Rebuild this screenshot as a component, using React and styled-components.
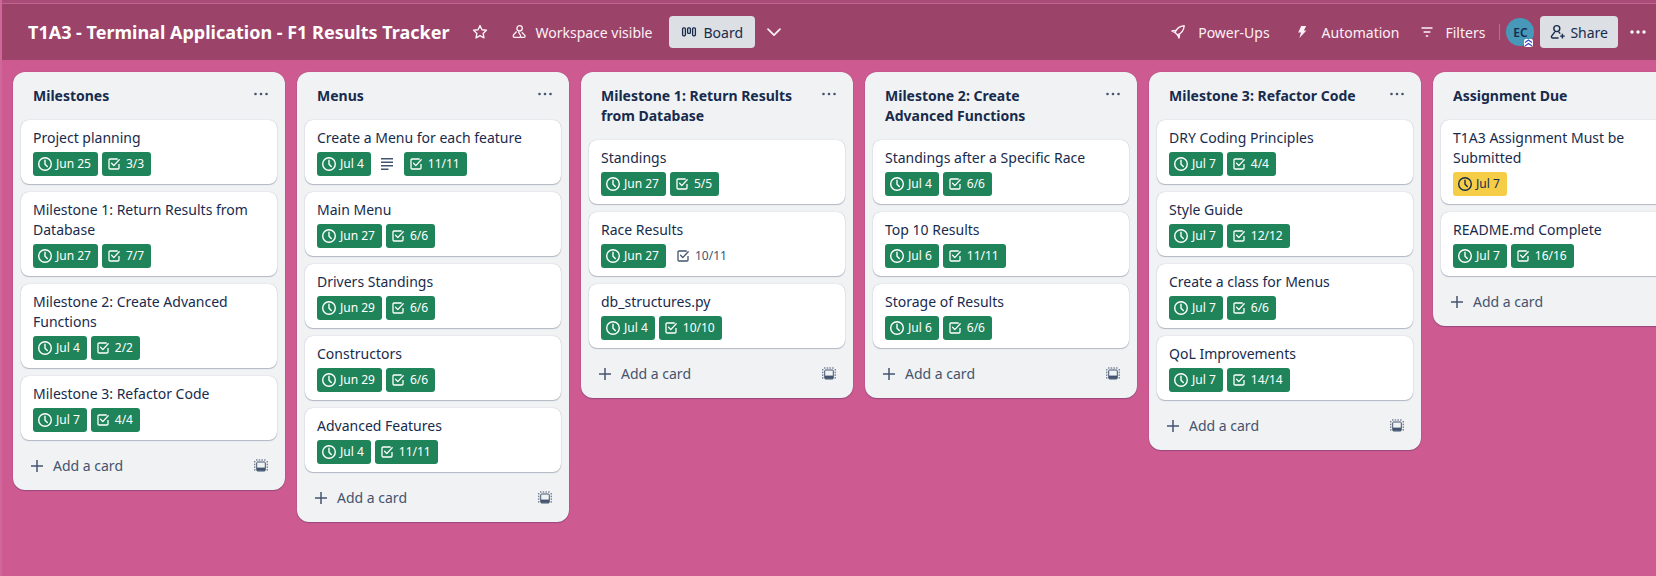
import React from 'react';
import styled, { createGlobalStyle } from 'styled-components';

const GlobalStyle = createGlobalStyle`
  html, body { margin: 0; padding: 0; height: 100%; overflow: hidden; }
  body { font-family: "Noto Sans", "Liberation Sans", sans-serif; font-size: 14px; background: #cd5a91; }
`;

const Page = styled.div`
  width: 1656px;
  height: 576px;
  box-sizing: border-box;
  display: flex;
  flex-direction: column;
  background: #cd5a91;
  border-left: 2px solid #d0679a;
  overflow: hidden;
`;
const TopEdge = styled.div`
  height: 4px;
  flex: none;
  background: #a94c78;
  border-bottom: 1px solid #c4638f;
  box-sizing: border-box;
`;
const Header = styled.header`
  height: 56px;
  flex: none;
  display: flex;
  align-items: center;
  padding: 0 10px 0 26px;
  background: #9c4369;
  color: #fdf1f6;
`;
const BoardTitle = styled.h1`
  margin: 0;
  font-size: 18px;
  line-height: 32px;
  font-weight: 700;
  color: #fff;
  white-space: nowrap;
`;
const HeaderItem = styled.div`
  display: flex;
  align-items: center;
  height: 32px;
  gap: ${p => p.$gap || 8}px;
  margin-left: ${p => p.$ml || 0}px;
  white-space: nowrap;
  color: ${p => (p.$light ? '#172b4d' : '#fdf1f6')};
  background: ${p => (p.$light ? '#dcdfe4' : 'transparent')};
  border-radius: 4px;
  padding: ${p => p.$pad || '0'};
  box-sizing: border-box;
`;
const Spacer = styled.div`flex: 1;`;
const Divider = styled.div`
  width: 1px;
  height: 16px;
  margin-left: 14px;
  background: rgba(255, 255, 255, 0.25);
`;
const Avatar = styled.div`
  position: relative;
  width: 28px;
  height: 28px;
  margin-left: 6px;
  border-radius: 50%;
  background: #4798b9;
  color: #172b4d;
  font-size: 12px;
  font-weight: 600;
  display: flex;
  align-items: center;
  justify-content: center;
`;
const AvatarBadge = styled.span`
  position: absolute;
  right: 1px;
  bottom: -1px;
  width: 9px;
  height: 8px;
  background: #fff;
  border-radius: 2px;
  display: flex;
`;
const Board = styled.main`
  flex: 1;
  display: flex;
  align-items: flex-start;
  gap: 12px;
  padding: 12px 0 0 11px;
  overflow: hidden;
`;
const Column = styled.section`
  flex: none;
  width: 272px;
  background: #f1f2f4;
  border-radius: 12px;
  box-shadow: 0 1px 1px #091e4240, 0 0 1px #091e424f;
  color: #172b4d;
`;
const ColumnHead = styled.div`
  display: flex;
  justify-content: space-between;
  padding: 14px 17px 14px 20px;
`;
const ColumnTitle = styled.h2`
  margin: 0;
  font-size: 14px;
  line-height: 20px;
  font-weight: 700;
  color: #172b4d;
  max-width: 200px;
`;
const CardList = styled.div`
  display: flex;
  flex-direction: column;
  gap: 8px;
  padding: 0 8px;
`;
const Card = styled.article`
  background: #fff;
  border-radius: 8px;
  padding: 8px 12px;
  box-shadow: 0 1px 1px #091e4240, 0 0 1px #091e424f;
`;
const CardText = styled.div`
  font-size: 14px;
  line-height: 20px;
  color: #172b4d;
`;
const Badges = styled.div`
  display: flex;
  align-items: center;
  gap: 4px;
  margin-top: 4px;
  height: 24px;
`;
const Badge = styled.span`
  display: inline-flex;
  align-items: center;
  height: 24px;
  gap: ${p => p.$gap}px;
  padding: ${p => (p.$tone === 'plain' ? '0 6px 0 5px' : '0 7px 0 4px')};
  border-radius: 3px;
  font-size: 12px;
  line-height: 16px;
  color: ${p => (p.$tone === 'yellow' ? '#172b4d' : p.$tone === 'plain' ? '#44546f' : '#fff')};
  background: ${p => (p.$tone === 'yellow' ? '#f5cd47' : p.$tone === 'plain' ? 'transparent' : '#1f845a')};
`;
const DescMark = styled.span`
  display: inline-flex;
  width: 24px;
  height: 24px;
  align-items: center;
  justify-content: center;
  color: #44546f;
  margin: 0 1px 0 0;
`;
const ColumnFoot = styled.div`
  display: flex;
  align-items: center;
  justify-content: space-between;
  height: 32px;
  padding: 10px 16px 8px 16px;
  color: #44546f;
`;
const AddCard = styled.div`
  display: flex;
  align-items: center;
  gap: 8px;
  font-size: 14px;
  line-height: 20px;
`;
const Svg = styled.svg`
  flex: none;
  display: block;
  fill: none;
  stroke: currentColor;
`;
const SolidSvg = styled.svg`
  flex: none;
  display: block;
  fill: ${p => p.$color || 'currentColor'};
`;

const Clock = () => (
  <Svg width="16" height="16" viewBox="0 0 16 16" strokeWidth="1.4">
    <circle cx="8" cy="8" r="6.3" />
    <path d="M8 4.2v4l2.3 2.4" strokeLinecap="round" strokeLinejoin="round" />
  </Svg>
);
const Check = () => (
  <Svg width="16" height="16" viewBox="0 0 16 16" strokeWidth="1.3">
    <path d="M13 8v3.9a1.1 1.1 0 0 1-1.1 1.1H4.1A1.1 1.1 0 0 1 3 11.9V4.1A1.1 1.1 0 0 1 4.1 3h7.6" />
    <path d="M5.6 7.2 7.8 9.6 13.2 3.8" strokeLinecap="round" strokeLinejoin="round" />
  </Svg>
);
const Lines = () => (
  <Svg width="16" height="16" viewBox="0 0 16 16" strokeWidth="1.6">
    <path d="M2 2.8h12M2 6.3h12M2 9.8h12M2 13.3h7.5" />
  </Svg>
);
const Dots = ({ color, size, step, r }) => (
  <SolidSvg $color={color} width={size} height="16" viewBox={`0 0 ${size} 16`}>
    <circle cx={size / 2 - step} cy="8" r={r} />
    <circle cx={size / 2} cy="8" r={r} />
    <circle cx={size / 2 + step} cy="8" r={r} />
  </SolidSvg>
);
const Plus = () => (
  <Svg width="16" height="16" viewBox="0 0 16 16" strokeWidth="1.5">
    <path d="M8 2v12M2 8h12" />
  </Svg>
);
const Template = () => (
  <Svg width="16" height="16" viewBox="0 0 16 16" strokeWidth="1">
    <path d="M3 2h10M1.8 3v10M14.2 3v10" strokeDasharray="1.5 1.2" />
    <rect x="3.7" y="4" width="8.6" height="9" rx="1" />
    <rect x="4" y="9.6" width="8" height="3.2" fill="currentColor" stroke="none" />
  </Svg>
);
const Star = () => (
  <Svg width="16" height="16" viewBox="0 0 16 16" strokeWidth="1.4" strokeLinejoin="round">
    <path d="M8 1.6l1.95 4.1 4.45.6-3.25 3.1.8 4.5L8 11.7l-3.95 2.2.8-4.5L1.6 6.3l4.45-.6z" />
  </Svg>
);
const People = () => (
  <Svg width="16" height="16" viewBox="0 0 16 16" strokeWidth="1.3" strokeLinejoin="round">
    <circle cx="8.6" cy="4.3" r="2.7" />
    <path d="M5.6 7.5 2.6 10.8c-.8 1-.5 2.6 1.1 2.6h4.7c1.3 0 1.5-1.3 1-2.2L7.3 7.6" />
    <path d="M10.8 8.2l3 3.2c.6.9.2 2-1 2H9.5" />
  </Svg>
);
const BoardIcon = () => (
  <Svg width="16" height="16" viewBox="0 0 16 16" strokeWidth="1.3">
    <rect x="1.6" y="3.8" width="2.8" height="8" rx="1" />
    <rect x="6.6" y="3.8" width="2.8" height="5.6" rx="1" />
    <rect x="11.6" y="3.8" width="2.8" height="8" rx="1" />
  </Svg>
);
const Chevron = () => (
  <Svg width="16" height="16" viewBox="0 0 16 16" strokeWidth="1.7" strokeLinecap="round" strokeLinejoin="round">
    <path d="M2 5.2l6 6 6-6" />
  </Svg>
);
const Rocket = () => (
  <Svg width="16" height="16" viewBox="0 0 16 16" strokeWidth="1.4" strokeLinejoin="round">
    <path d="M14.2 1.8C9.6 2.2 6.6 4.6 5 8.4l2.6 2.6c3.8-1.6 6.2-4.6 6.6-9.2z" />
    <path d="M5.6 6.4 2 7l3 1.4M9.6 10.4 9 14l-1.4-3" />
  </Svg>
);
const Bolt = () => (
  <SolidSvg width="16" height="16" viewBox="0 0 16 16">
    <path d="M7.2 2h5L9.8 6.4h2.6L5.4 14l1.6-5.4H4.2z" />
  </SolidSvg>
);
const FilterIcon = () => (
  <Svg width="16" height="16" viewBox="0 0 16 16" strokeWidth="1.5">
    <path d="M2.5 4h11M4.6 8h6.8M6.8 12h2.4" />
  </Svg>
);
const Share = () => (
  <Svg width="16" height="16" viewBox="0 0 16 16" strokeWidth="1.4" strokeLinejoin="round">
    <circle cx="6.8" cy="4.6" r="3" />
    <path d="M4.8 7.8 1.6 12.2c-.5 1 .1 1.8 1 1.8h6" />
    <path d="M8.8 7.8l1.4 1.9M12.4 9.8v4.6M10.1 12.1h4.6" />
  </Svg>
);
const Chevrons = () => (
  <Svg width="9" height="8" viewBox="0 0 9 8" strokeWidth="1.2" color="#3b4cc0">
    <path d="M1 3.6 4.5 1 8 3.6M1 7 4.5 4.4 8 7" />
  </Svg>
);

const c = (title, date, checks, opts = {}) => ({ title, date, checks, ...opts });

const columns = [
  { title: 'Milestones', cards: [
    c('Project planning', 'Jun 25', '3/3'),
    c('Milestone 1: Return Results from Database', 'Jun 27', '7/7'),
    c('Milestone 2: Create Advanced Functions', 'Jul 4', '2/2'),
    c('Milestone 3: Refactor Code', 'Jul 7', '4/4'),
  ] },
  { title: 'Menus', cards: [
    c('Create a Menu for each feature', 'Jul 4', '11/11', { desc: true }),
    c('Main Menu', 'Jun 27', '6/6'),
    c('Drivers Standings', 'Jun 29', '6/6'),
    c('Constructors', 'Jun 29', '6/6'),
    c('Advanced Features', 'Jul 4', '11/11'),
  ] },
  { title: 'Milestone 1: Return Results from Database', cards: [
    c('Standings', 'Jun 27', '5/5'),
    c('Race Results', 'Jun 27', '10/11', { open: true }),
    c('db_structures.py', 'Jul 4', '10/10'),
  ] },
  { title: 'Milestone 2: Create Advanced Functions', cards: [
    c('Standings after a Specific Race', 'Jul 4', '6/6'),
    c('Top 10 Results', 'Jul 6', '11/11'),
    c('Storage of Results', 'Jul 6', '6/6'),
  ] },
  { title: 'Milestone 3: Refactor Code', cards: [
    c('DRY Coding Principles', 'Jul 7', '4/4'),
    c('Style Guide', 'Jul 7', '12/12'),
    c('Create a class for Menus', 'Jul 7', '6/6'),
    c('QoL Improvements', 'Jul 7', '14/14'),
  ] },
  { title: 'Assignment Due', cards: [
    c('T1A3 Assignment Must be Submitted', 'Jul 7', null, { due: true }),
    c('README.md Complete', 'Jul 7', '16/16'),
  ] },
];

export default function App() {
  return (
    <Page>
      <GlobalStyle />
      <TopEdge />
      <Header>
        <BoardTitle>T1A3 - Terminal Application - F1 Results Tracker</BoardTitle>
        <HeaderItem $ml={23}><Star /></HeaderItem>
        <HeaderItem $ml={23} $gap={8}><People />Workspace visible</HeaderItem>
        <HeaderItem $ml={16} $light $pad="0 12px" $gap={7}><BoardIcon />Board</HeaderItem>
        <HeaderItem $ml={11}><Chevron /></HeaderItem>
        <Spacer />
        <HeaderItem $gap={12}><Rocket />Power-Ups</HeaderItem>
        <HeaderItem $ml={24} $gap={12}><Bolt />Automation</HeaderItem>
        <HeaderItem $ml={20} $gap={10}><FilterIcon />Filters</HeaderItem>
        <Divider />
        <Avatar>EC<AvatarBadge><Chevrons /></AvatarBadge></Avatar>
        <HeaderItem $ml={6} $light $pad="0 10px" $gap={4}><Share />Share</HeaderItem>
        <HeaderItem $ml={12}><Dots color="#fff" size={16} step={6} r={1.7} /></HeaderItem>
      </Header>
      <Board>
        {columns.map(col => (
          <Column key={col.title}>
            <ColumnHead>
              <ColumnTitle>{col.title}</ColumnTitle>
              <Dots color="#44546f" size={14} step={5.5} r={1.3} />
            </ColumnHead>
            <CardList>
              {col.cards.map(card => (
                <Card key={card.title}>
                  <CardText>{card.title}</CardText>
                  <Badges>
                    <Badge $tone={card.due ? 'yellow' : 'green'} $gap={3}><Clock />{card.date}</Badge>
                    {card.desc && <DescMark><Lines /></DescMark>}
                    {card.checks && (
                      <Badge $tone={card.open ? 'plain' : 'green'} $gap={4}><Check />{card.checks}</Badge>
                    )}
                  </Badges>
                </Card>
              ))}
            </CardList>
            <ColumnFoot>
              <AddCard><Plus />Add a card</AddCard>
              <Template />
            </ColumnFoot>
          </Column>
        ))}
      </Board>
    </Page>
  );
}
